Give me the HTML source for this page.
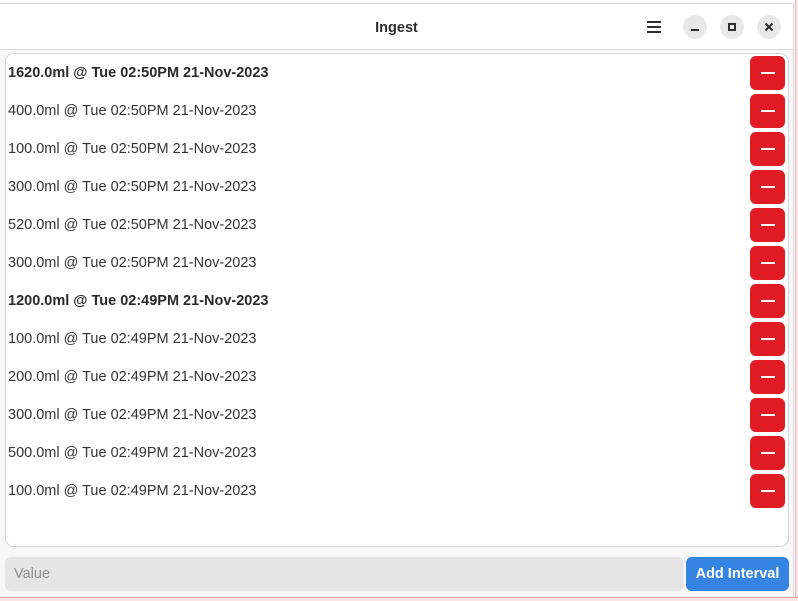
<!DOCTYPE html>
<html><head><meta charset="utf-8"><style>
*{box-sizing:border-box;margin:0;padding:0}
html,body{width:798px;height:601px;overflow:hidden;background:#fff;font-family:"Liberation Sans",sans-serif}
.win{position:absolute;left:0;top:3px;width:794px;height:594px;background:#f8f8f8;border-top:1px solid #dcdcdc;border-right:1px solid #d8d8d8}
.edge{position:absolute;left:0;top:597px;width:798px;height:4px;background:#fbe3e3;border-top:1px solid #f0a8a8}
.edger{position:absolute;left:795px;top:0;width:3px;height:601px;background:#fbe3e3;border-left:1px solid #f0b8b8}
.hdr{position:absolute;left:0;top:0;width:793px;height:46px;background:#fff;border-bottom:1px solid #dcdcdc}
.title{position:absolute;left:0;width:793px;top:16px;text-align:center;font-weight:bold;font-size:14.5px;color:#2e2e2e}
.cb{position:absolute;top:11px;width:24px;height:24px;border-radius:50%;background:#e8e8e8}
.list{position:absolute;left:5px;top:49px;width:784px;height:494px;background:#fff;border:1px solid #d6d6d6;border-radius:9px}
.row{position:absolute;left:2px;height:38px;line-height:38px;font-size:14.5px;color:#333}
.row.b{font-weight:bold;color:#2a2a2a}
.del{position:absolute;left:744px;width:35px;height:34px;background:#e01b24;border-radius:6px}
.del:after{content:"";position:absolute;left:11px;top:16px;width:14px;height:2px;background:#fff}
.entry{position:absolute;left:5px;top:553px;width:679px;height:34px;background:#e5e5e5;border-radius:6px;font-size:14.5px;color:#8e8e8e;line-height:34px;padding-left:9px}
.btn{position:absolute;left:686px;top:553px;width:103px;height:34px;background:#3584e4;border-radius:6px;color:#fff;font-weight:bold;font-size:14.5px;line-height:34px;text-align:center}
</style></head><body>
<div class="edger"></div>
<div class="win">
<div class="hdr">
<div class="title">Ingest</div>
<svg style="position:absolute;left:646px;top:16px" width="16" height="14"><path d="M1 2h14M1 7h14M1 12h14" stroke="#2e2e2e" stroke-width="2"/></svg>
<div class="cb" style="left:683px"><div style="position:absolute;left:8px;top:14px;width:8px;height:2px;background:#2e2e2e"></div></div>
<div class="cb" style="left:720px"><div style="position:absolute;left:8px;top:8px;width:8px;height:8px;border:2px solid #2e2e2e"></div></div>
<div class="cb" style="left:757px"><svg width="24" height="24" style="position:absolute;left:0;top:0"><path d="M8.5 8.5l7 7M15.5 8.5l-7 7" stroke="#2e2e2e" stroke-width="2"/></svg></div>
</div>
<div class="list">
<div class="row b" style="top:0">1620.0ml @ Tue 02:50PM 21-Nov-2023</div>
<div class="row" style="top:38px">400.0ml @ Tue 02:50PM 21-Nov-2023</div>
<div class="row" style="top:76px">100.0ml @ Tue 02:50PM 21-Nov-2023</div>
<div class="row" style="top:114px">300.0ml @ Tue 02:50PM 21-Nov-2023</div>
<div class="row" style="top:152px">520.0ml @ Tue 02:50PM 21-Nov-2023</div>
<div class="row" style="top:190px">300.0ml @ Tue 02:50PM 21-Nov-2023</div>
<div class="row b" style="top:228px">1200.0ml @ Tue 02:49PM 21-Nov-2023</div>
<div class="row" style="top:266px">100.0ml @ Tue 02:49PM 21-Nov-2023</div>
<div class="row" style="top:304px">200.0ml @ Tue 02:49PM 21-Nov-2023</div>
<div class="row" style="top:342px">300.0ml @ Tue 02:49PM 21-Nov-2023</div>
<div class="row" style="top:380px">500.0ml @ Tue 02:49PM 21-Nov-2023</div>
<div class="row" style="top:418px">100.0ml @ Tue 02:49PM 21-Nov-2023</div>
<div class="del" style="top:2px"></div>
<div class="del" style="top:40px"></div>
<div class="del" style="top:78px"></div>
<div class="del" style="top:116px"></div>
<div class="del" style="top:154px"></div>
<div class="del" style="top:192px"></div>
<div class="del" style="top:230px"></div>
<div class="del" style="top:268px"></div>
<div class="del" style="top:306px"></div>
<div class="del" style="top:344px"></div>
<div class="del" style="top:382px"></div>
<div class="del" style="top:420px"></div>
</div>
<div class="entry">Value</div>
<div class="btn">Add Interval</div>
</div>
<div class="edge"></div>
</body></html>
